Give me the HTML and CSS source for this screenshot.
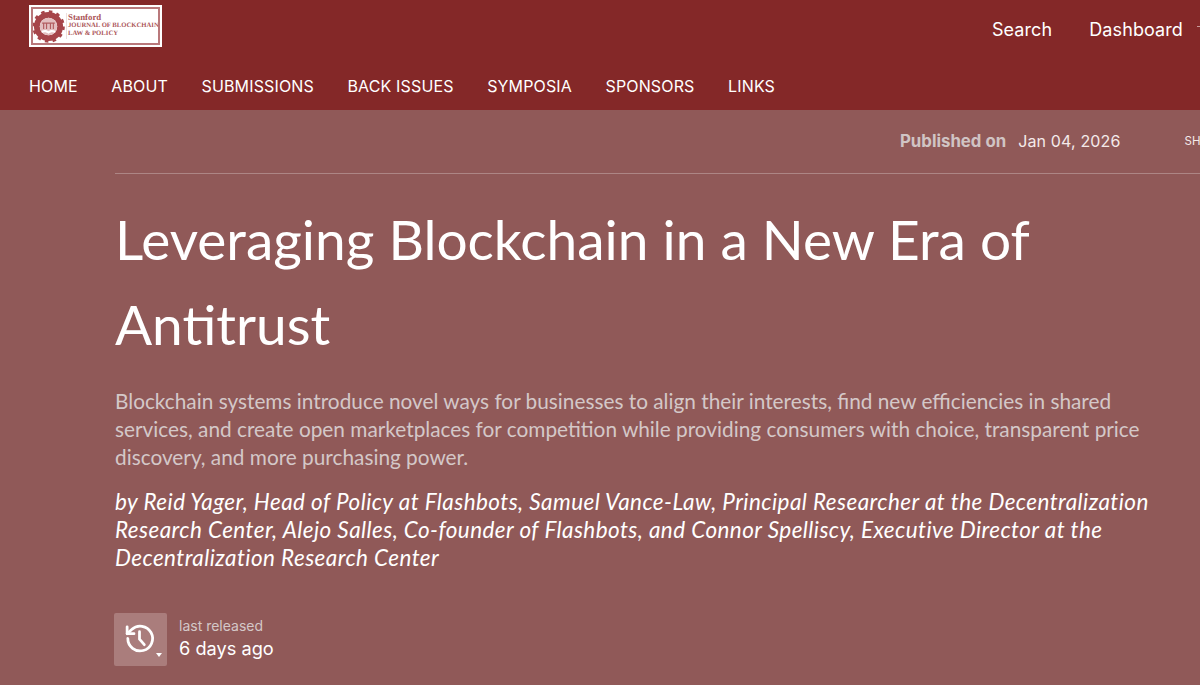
FILE: index.html
```html
<!DOCTYPE html>
<html lang="en">
<head>
<meta charset="utf-8">
<title>Leveraging Blockchain in a New Era of Antitrust</title>
<link rel="stylesheet" href="styles.css">
</head>
<body>
<header class="site-header">
  <div class="top-row">
    <a class="logo">
      <svg class="logo-mark" viewBox="0 0 34 34" width="33" height="33">
        <circle cx="17" cy="17" r="12" fill="none" stroke="#a6454a" stroke-width="6"/>
        <circle cx="17" cy="17" r="15.300" fill="none" stroke="#a6454a" stroke-width="3" stroke-dasharray="3.600 4.400"/>
        <circle cx="17" cy="17" r="9" fill="#e3bfc0"/>
        <path d="M10.500 13.500h13M12 13.500v6M15 13.500v6M19 13.500v6M22 13.500v6" stroke="#b25e61" stroke-width="1.200" fill="none"/>
        <path d="M10 21.500c3-1.500 5-1 7 .5 2-1.500 4-2 7-.5v2c-3-1-5-.5-7 1-2-1.500-4-2-7-1z" fill="#fff"/>
      </svg>
      <span class="logo-text">
        <span class="logo-line logo-first">Stanford</span>
        <span class="logo-line">JOURNAL OF BLOCKCHAIN</span>
        <span class="logo-line">LAW &amp; POLICY</span>
      </span>
    </a>
    <div class="top-links">
      <a>Search</a>
      <a>Dashboard</a>
    </div>
  </div>
  <nav class="main-nav">
    <a>HOME</a>
    <a>ABOUT</a>
    <a>SUBMISSIONS</a>
    <a>BACK ISSUES</a>
    <a>SYMPOSIA</a>
    <a>SPONSORS</a>
    <a>LINKS</a>
  </nav>
</header>
<main class="hero">
  <div class="meta-row">
    <span class="meta-label">Published on</span>
    <span class="meta-date">Jan 04, 2026</span>
    <span class="meta-share">SHARE</span>
  </div>
  <h1 class="title">Leveraging Blockchain in a New Era of Antitrust</h1>
  <p class="summary">Blockchain systems introduce novel ways for businesses to align their interests, find new efficiencies in shared services, and create open marketplaces for competition while providing consumers with choice, transparent price discovery, and more purchasing power.</p>
  <p class="byline">by Reid Yager, Head of Policy at Flashbots, Samuel Vance-Law, Principal Researcher at the Decentralization Research Center, Alejo Salles, Co-founder of Flashbots, and Connor Spelliscy, Executive Director at the Decentralization Research Center</p>
  <div class="release">
    <div class="history-btn">
      <svg class="history-icon" viewBox="0 0 24 24" width="33" height="33" fill="none" stroke="#fff" stroke-width="2" stroke-linecap="round" stroke-linejoin="round">
        <path d="M3.500 12a9 9 0 1 0 2.800-6.500L3 8.500"/>
        <path d="M3 3.500v5h5"/>
        <path d="M12 7v5.500l3.500 4"/>
      </svg>
      <span class="caret"></span>
    </div>
    <div class="release-text">
      <span class="release-label">last released</span>
      <span class="release-value">6 days ago</span>
    </div>
  </div>
</main>
</body>
</html>
```
FILE: styles.css
```css
* { box-sizing: border-box; }
html, body { margin: 0; height: 100%; overflow: hidden; }
body {
  width: 1200px;
  height: 685px;
  background: #905958;
  font-family: Inter, "Liberation Sans", sans-serif;
  color: #fff;
}
.site-header {
  position: relative;
  height: 110px;
  background: #842828;
  padding: 5px 0 0 29px;
}
.site-header::after {
  content: "";
  position: absolute;
  top: 26px;
  right: 0;
  width: 3px;
  height: 1px;
  background: #c99a9a;
}
.top-row {
  display: flex;
  justify-content: space-between;
  height: 58px;
}
.logo {
  width: 133px;
  height: 42px;
  background: #fff;
  border: 1px solid #fff;
  outline: 2px solid #b9787b;
  outline-offset: -4px;
  display: flex;
  align-items: center;
  gap: 1px;
  padding: 0 0 0 2px;
}
.logo-mark { flex: none; }
.logo-text {
  display: flex;
  flex-direction: column;
  border-left: 1px solid #eddede;
  padding-left: 1px;
  font-family: "Liberation Serif", serif;
  font-weight: 700;
  font-size: 6.700px;
  line-height: 8.500px;
  text-rendering: geometricPrecision;
  color: #ab5558;
  white-space: nowrap;
}
.logo-first { font-size: 8.800px; }
.top-links {
  display: flex;
  gap: 37px;
  font-size: 18px;
  letter-spacing: .1px;
  line-height: 22px;
  padding-top: 14px;
  margin-right: 17px;
}
.main-nav {
  display: flex;
  gap: 33.500px;
  font-size: 16px;
  letter-spacing: .15px;
  line-height: 20px;
  padding-top: 13px;
}
.hero { padding: 0 0 0 115px; }
.meta-row {
  height: 64px;
  border-bottom: 1px solid #ad8685;
  display: flex;
  align-items: flex-start;
  padding: 21px 0 0 785px;
  font-size: 16px;
  line-height: 20px;
  white-space: nowrap;
  overflow: hidden;
}
.meta-label { font-weight: 700; font-size: 16.800px; color: #d0c4c4; }
.meta-date { margin-left: 12px; letter-spacing: .15px; color: #f4eaea; }
.meta-share { margin-left: 64px; font-size: 11.500px; color: #f4eaea; }
.title {
  margin: 23px 0 0;
  width: 1000px;
  font-family: Lato, sans-serif;
  font-weight: 400;
  font-size: 55px;
  line-height: 85px;
}
.summary {
  margin: 20px 0 0;
  width: 1050px;
  font-family: Lato, sans-serif;
  font-size: 20.800px;
  line-height: 28px;
  color: #d4c8c8;
}
.byline {
  margin: 17px 0 0;
  width: 1040px;
  font-family: Lato, sans-serif;
  font-style: italic;
  font-size: 22.500px;
  letter-spacing: .43px;
  line-height: 28px;
}
.release {
  margin: 41px 0 0 -1px;
  display: flex;
  gap: 12px;
  align-items: center;
}
.history-btn {
  position: relative;
  width: 53px;
  height: 53px;
  flex: none;
  border-radius: 2px;
  background: #aa7d7c;
  display: flex;
  align-items: center;
  justify-content: center;
}
.history-icon { margin: 0 2px 2px 0; }
.caret {
  position: absolute;
  right: 5px;
  bottom: 9px;
  border: 3px solid transparent;
  border-top: 4px solid #fff;
  border-bottom: 0;
}
.release-text { display: flex; flex-direction: column; margin-top: -3px; }
.release-label { font-size: 14px; line-height: 20px; color: #d4c8c8; }
.release-value { font-size: 18.200px; line-height: 24px; }
```
